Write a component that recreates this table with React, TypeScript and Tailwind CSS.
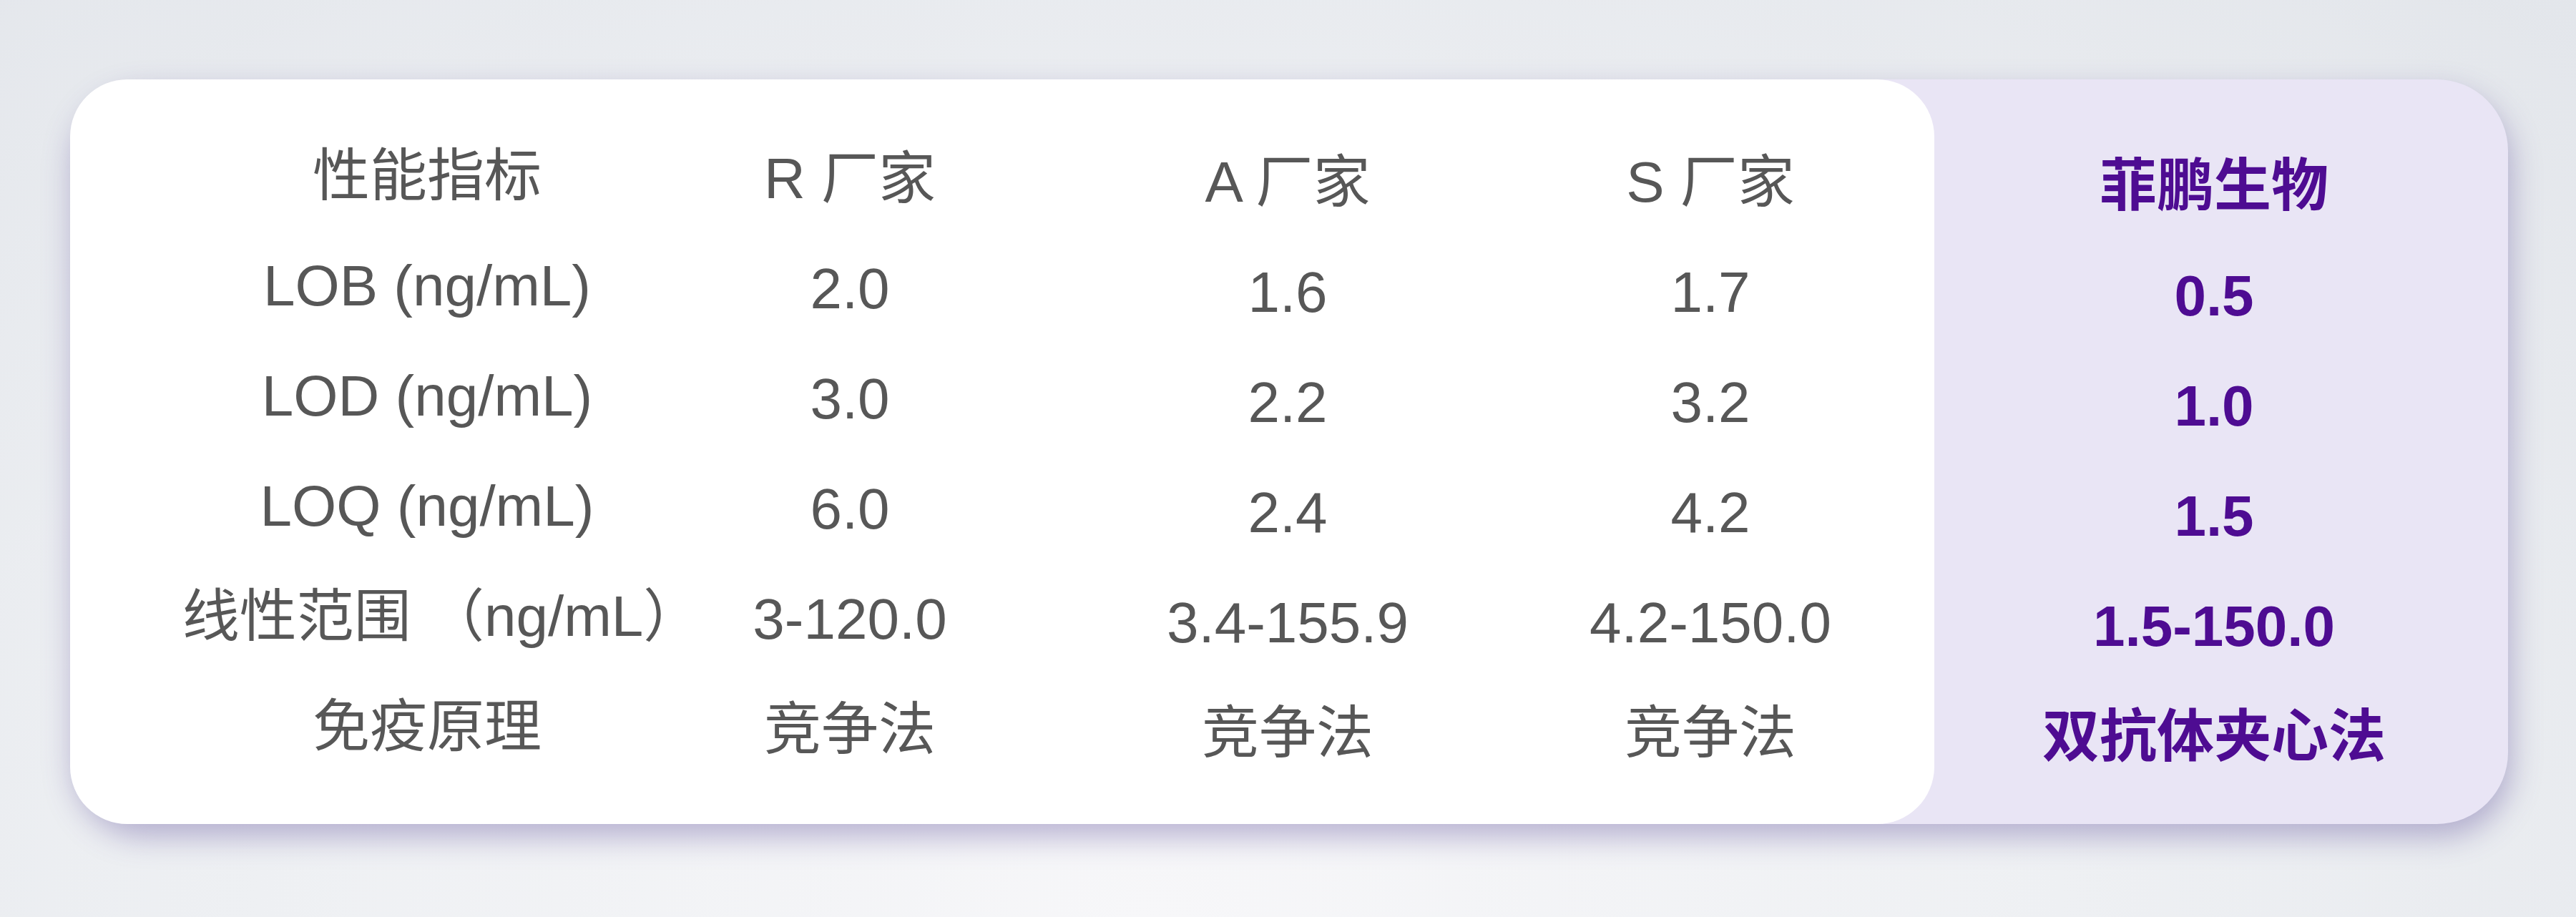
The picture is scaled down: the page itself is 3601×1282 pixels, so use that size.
import React from "react";

const col1 = ["性能指标", "LOB (ng/mL)", "LOD (ng/mL)", "LOQ (ng/mL)", "线性范围 （ng/mL）", "免疫原理"];
const colR = ["R 厂家", "2.0", "3.0", "6.0", "3-120.0", "竞争法"];
const colA = ["A 厂家", "1.6", "2.2", "2.4", "3.4-155.9", "竞争法"];
const colS = ["S 厂家", "1.7", "3.2", "4.2", "4.2-150.0", "竞争法"];
const colP = ["菲鹏生物", "0.5", "1.0", "1.5", "1.5-150.0", "双抗体夹心法"];

function Cells({ items, shiftIndex }: { items: string[]; shiftIndex?: number }) {
  return (
    <>
      {items.map((t, i) => (
        <div
          key={i}
          className={
            i === shiftIndex
              ? "h-[154px] flex items-center justify-center pl-[40px]"
              : "h-[154px] flex items-center justify-center"
          }
        >
          <span className="whitespace-nowrap leading-none">{t}</span>
        </div>
      ))}
    </>
  );
}

export default function App() {
  return (
    <div className="w-[3601px] h-[1282px] overflow-hidden bg-[radial-gradient(ellipse_at_45%_100%,#f7f7f9_0%,#eef0f3_45%,#e3e6eb_100%)] pt-[111px] pl-[98px] font-['Liberation_Sans','Noto_Sans_CJK_SC',sans-serif]">
      <div className="w-[3408px] h-[1041px] flex bg-[#e9e5f5] rounded-[100px] shadow-[4px_18px_42px_0_rgba(88,70,150,0.38)]">
        <div className="w-[2606px] h-full bg-white rounded-[80px] pl-[204px] flex text-[80px] text-[#575757]">
          <div className="w-[590px] flex flex-col pt-[58px]">
            <Cells items={col1} shiftIndex={4} />
          </div>
          <div className="w-[592px] flex flex-col pt-[62px]">
            <Cells items={colR} />
          </div>
          <div className="w-[632px] flex flex-col pt-[67px]">
            <Cells items={colA} />
          </div>
          <div className="w-[550px] flex flex-col pt-[67px]">
            <Cells items={colS} />
          </div>
        </div>
        <div className="flex-1 flex flex-col pt-[72px] pr-[20px] text-[80px] font-bold text-[#4e0c92]">
          <Cells items={colP} />
        </div>
      </div>
    </div>
  );
}
